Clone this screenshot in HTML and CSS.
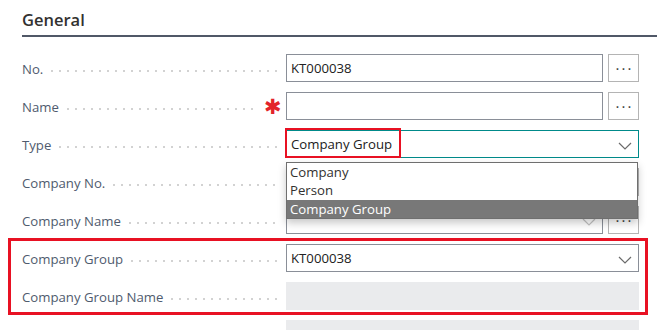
FILE: index.html
```html
<!DOCTYPE html>
<html lang="en">

<head>
  <meta charset="UTF-8">
  <meta name="viewport" content="width=device-width, initial-scale=1.0">
  <title>General</title>

  <link rel="stylesheet" href="styles.css">
</head>

<body>
  <div class="page">
    <h2 class="section-title">General</h2>

    <div class="form">
      <div class="row">
        <div class="label"><span>No.</span><i class="leader"></i></div>
        <div class="field">
          <div class="box">KT000038</div>
          <div class="more">&middot;&middot;&middot;</div>
        </div>
      </div>

      <div class="row">
        <div class="label"><span>Name</span><i class="leader"></i><b class="required">&#10033;</b></div>
        <div class="field">
          <div class="box"></div>
          <div class="more">&middot;&middot;&middot;</div>
        </div>
      </div>

      <div class="row">
        <div class="label"><span>Type</span><i class="leader"></i></div>
        <div class="field type-field">
          <div class="box select focused">Company Group
            <svg class="chevron" width="14" height="8" viewBox="0 0 14 8"><path d="M1 1l6 6 6-6" fill="none" stroke="#6b6b6b" stroke-width="1.2"/></svg>
          </div>
          <span class="mark mark-type"></span>
          <ul class="options">
            <li>Company</li>
            <li>Person</li>
            <li class="selected">Company Group</li>
          </ul>
        </div>
      </div>

      <div class="row">
        <div class="label"><span>Company No.</span><i class="leader"></i></div>
        <div class="field">
          <div class="box select"></div>
          <div class="more">&middot;&middot;&middot;</div>
        </div>
      </div>

      <div class="row">
        <div class="label"><span>Company Name</span><i class="leader"></i></div>
        <div class="field">
          <div class="box select">
            <svg class="chevron" width="14" height="8" viewBox="0 0 14 8"><path d="M1 1l6 6 6-6" fill="none" stroke="#c3c3c3" stroke-width="1.2"/></svg>
          </div>
          <div class="more">&middot;&middot;&middot;</div>
        </div>
      </div>

      <div class="group">
        <span class="mark mark-group"></span>
        <div class="row">
          <div class="label"><span>Company Group</span><i class="leader"></i></div>
          <div class="field">
            <div class="box select">KT000038
              <svg class="chevron" width="14" height="8" viewBox="0 0 14 8"><path d="M1 1l6 6 6-6" fill="none" stroke="#6b6b6b" stroke-width="1.2"/></svg>
            </div>
          </div>
        </div>

        <div class="row">
          <div class="label"><span>Company Group Name</span><i class="leader"></i></div>
          <div class="field">
            <div class="box readonly"></div>
          </div>
        </div>
      </div>

      <div class="row">
        <div class="label"></div>
        <div class="field">
          <div class="box readonly"></div>
        </div>
      </div>
    </div>
  </div>
</body>

</html>
```

FILE: styles.css
```css
* {
  box-sizing: border-box;
}

body {
  margin: 0;
  background-color: #ffffff;
  font-family: "Open Sans", "Noto Sans", sans-serif;
  font-size: 13.2px;
  color: #212121;
  overflow: hidden;
}

.page {
  padding: 8px 18px 0 22px;
}

.section-title {
  margin: 0;
  font-size: 16.5px;
  font-weight: 600;
  color: #323130;
  padding-bottom: 4px;
  border-bottom: 2px solid #505867;
  margin-right: -18px;
}

.form {
  margin-top: 17px;
  display: flex;
  flex-direction: column;
  gap: 10px;
}

.group {
  position: relative;
  display: flex;
  flex-direction: column;
  gap: 10px;
}

.row {
  display: flex;
  height: 28px;
}

.label {
  width: 264px;
  display: flex;
  align-items: center;
  color: #4f5b6e;
  padding: 2px 6px 0 0;
}

.leader {
  flex: 1;
  height: 2px;
  margin: 4px 0 0 8px;
  background-image: linear-gradient(to right, #d2d2d2 2px, transparent 2px);
  background-size: 8px 2px;
  background-repeat: repeat-x;
}

.required {
  color: #e3232a;
  font-family: "DejaVu Sans", sans-serif;
  font-size: 21px;
  line-height: 1;
  margin: 0 0 0 5px;
  width: 16px;
  text-align: center;
}

.field {
  width: 353px;
  display: flex;
  gap: 5px;
  position: relative;
}

.box {
  flex: 1;
  border: 1px solid #8a8f98;
  padding: 0 4px;
  display: flex;
  align-items: center;
  position: relative;
}

.select .chevron {
  position: absolute;
  right: 6px;
  top: 11px;
}

.focused {
  border-color: #008a8a;
}

.readonly {
  border: none;
  background-color: #eaebed;
}

.more {
  width: 31px;
  border: 1px solid #b4b4b4;
  display: flex;
  align-items: center;
  justify-content: center;
  font-size: 15px;
  letter-spacing: 2px;
  padding-left: 2px;
  color: #3b3b3b;
}

.options {
  position: absolute;
  top: 32px;
  left: 0;
  width: 352px;
  margin: 0;
  padding: 0;
  list-style: none;
  background: #ffffff;
  border: 1px solid #6f6f6f;
  box-shadow: 0 4px 8px rgba(0, 0, 0, 0.22);
  z-index: 2;
}

.options li {
  height: 18.3px;
  line-height: 18px;
  padding-left: 3px;
  color: #323130;
}

.options .selected {
  background-color: #787878;
  color: #ffffff;
}

.mark {
  position: absolute;
  border: 2px solid #e81123;
  z-index: 3;
}

.mark-type {
  left: -1px;
  top: -2px;
  width: 116px;
  height: 30px;
}

.mark-group {
  left: -14px;
  top: -6px;
  width: 640px;
  height: 77px;
  border-width: 3px;
}
```
